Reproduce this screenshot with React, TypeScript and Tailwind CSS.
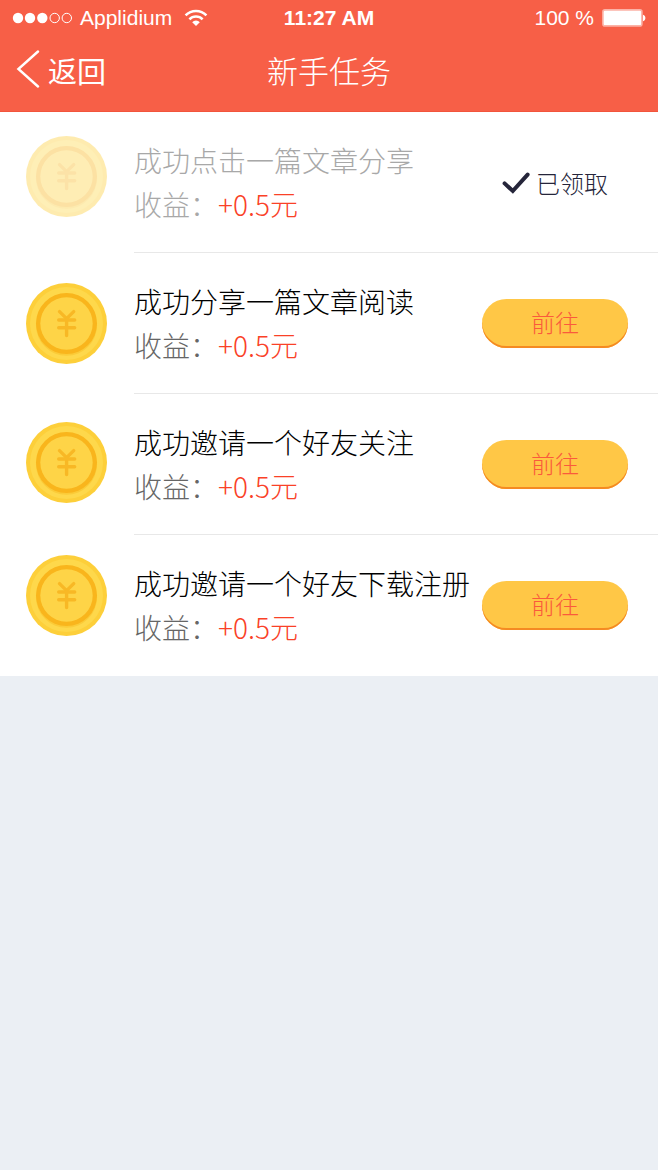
import { clsx } from "clsx"

type Task = {
  id: number
  title: string
  reward: string
  claimed: boolean
  coinClass: string
}

const TASKS: Task[] = [
  { id: 1, title: "成功点击一篇文章分享", reward: "+0.5元", claimed: true, coinClass: "mt-6 opacity-40" },
  { id: 2, title: "成功分享一篇文章阅读", reward: "+0.5元", claimed: false, coinClass: "mt-[30px]" },
  { id: 3, title: "成功邀请一个好友关注", reward: "+0.5元", claimed: false, coinClass: "mt-7" },
  { id: 4, title: "成功邀请一个好友下载注册", reward: "+0.5元", claimed: false, coinClass: "mt-5" },
]

const SignalDots = () => (
  <svg width="60" height="12" viewBox="0 0 60 12" aria-hidden="true">
    <circle cx="6" cy="6" r="5.2" fill="white" />
    <circle cx="18" cy="6" r="5.2" fill="white" />
    <circle cx="30.3" cy="6" r="5.2" fill="white" />
    <circle cx="42.7" cy="6" r="4.7" fill="none" stroke="white" />
    <circle cx="54.8" cy="6" r="4.7" fill="none" stroke="white" />
  </svg>
)

const WifiIcon = () => (
  <svg width="24" height="18" viewBox="0 0 24 18" fill="none" stroke="white" strokeWidth="2.6" aria-hidden="true">
    <path d="M1.6 6.4a14.6 14.6 0 0 1 20.8 0" />
    <path d="M5.4 10.3a9.3 9.3 0 0 1 13.2 0" />
    <path d="M12 17l-3.8-3.7a5 5 0 0 1 7.6 0z" fill="white" stroke="none" />
  </svg>
)

const BatteryIcon = () => (
  <svg width="44" height="18" viewBox="0 0 44 18" aria-hidden="true">
    <rect x="0.9" y="0.9" width="39" height="16" rx="2" fill="white" stroke="#fcb3a7" strokeWidth="1.6" />
    <path d="M41 5.8c3.2 0.6 3.2 5.8 0 6.4z" fill="white" />
  </svg>
)

const Coin = ({ className }: { className?: string }) => (
  <svg width="81" height="81" viewBox="0 0 81 81" className={clsx("shrink-0", className)} aria-hidden="true">
    <circle cx="40.5" cy="40.5" r="40.5" fill="#fdcf3a" />
    <circle cx="40.5" cy="40.5" r="36.5" fill="#fed84b" />
    <circle cx="40.5" cy="42.3" r="30.5" fill="#fbcb38" />
    <circle cx="40.5" cy="40.5" r="30.5" fill="#f9b51c" />
    <circle cx="40.5" cy="40.5" r="26.2" fill="#fed447" />
    <g fill="none" stroke="#f8b825" strokeWidth="3.4" strokeLinecap="round" strokeLinejoin="round">
      <path d="M33.5 28.6l7.1 7 7.1-7" />
      <path d="M32.7 37h16M32.7 44.8h16M40.6 35.6v17" />
    </g>
  </svg>
)

const StatusBar = () => (
  <div className="grid grid-cols-[1fr_auto_1fr] items-center h-9 px-3 text-[21px]">
    <div className="flex items-center">
      <SignalDots />
      <span className="ml-2 mr-3">Applidium</span>
      <WifiIcon />
    </div>
    <span className="font-bold">11:27 AM</span>
    <div className="flex items-center justify-end gap-2">
      <span>100 %</span>
      <BatteryIcon />
    </div>
  </div>
)

const Header = () => (
  <header className="bg-[#f75f47] border-b border-[#f2553c] text-white">
    <StatusBar />
    <nav className="grid grid-cols-[1fr_auto_1fr] items-center h-[75px] px-4 pb-1.5 font-['Noto_Sans_CJK_SC',sans-serif]">
      <a href="#back" className="flex items-center gap-2 text-[29px] font-normal">
        <svg width="24" height="38" viewBox="0 0 24 38" className="mb-1" fill="none" stroke="white" strokeWidth="2.4" aria-hidden="true">
          <path d="M22 1.5L2.4 19 22 36.5" strokeLinecap="round" />
        </svg>
        返回
      </a>
      <h1 className="text-[31px] font-light">新手任务</h1>
    </nav>
  </header>
)

const TaskRow = ({ task, isLast }: { task: Task; isLast: boolean }) => (
  <li className="flex items-start gap-[27px] pl-[26px]">
    <Coin className={task.coinClass} />
    <div
      className={clsx(
        "flex flex-1 items-center justify-between border-b pr-[30px]",
        isLast ? "border-transparent" : "border-[#e8e8e8]"
      )}>
      <div className="py-[26px] text-[28px] leading-[44px] font-light whitespace-nowrap">
        <h2 className={task.claimed ? "text-[#a8a8a8]" : "text-black"}>{task.title}</h2>
        <p className={task.claimed ? "text-[#a8a8a8]" : "text-[#666666]"}>
          收益：
          <span className="text-[#fa4127]">{task.reward}</span>
        </p>
      </div>

      {task.claimed ? (
        <div className="flex items-center gap-1.5 pt-0.5 pr-5 text-2xl font-light text-[#25253a]">
          <svg width="28" height="22" viewBox="0 0 28 22" fill="none" stroke="#25253a" strokeWidth="4" aria-hidden="true">
            <path d="M2.6 11.4l8.2 7.6L25.6 2.6" strokeLinecap="round" strokeLinejoin="miter" />
          </svg>
          已领取
        </div>
      ) : (
        <button
          type="button"
          className="h-[49px] w-[146px] shrink-0 cursor-pointer rounded-full bg-[#ffc746] pb-0.5 text-2xl font-light text-[#fa5a3c] shadow-[inset_0_-2px_0_#f58a22]">
          前往
        </button>
      )}
    </div>
  </li>
)

const App = () => {
  return (
    <div className="min-h-screen bg-[#ebeff4] font-['Liberation_Sans','Noto_Sans_CJK_SC',sans-serif]">
      <Header />
      <main>
        <ul className="bg-white font-['Noto_Sans_CJK_SC',sans-serif]">
          {TASKS.map((task, index) => (
            <TaskRow
              key={task.id}
              task={task}
              isLast={index === TASKS.length - 1}
            />
          ))}
        </ul>
      </main>
    </div>
  )
}

export default App
